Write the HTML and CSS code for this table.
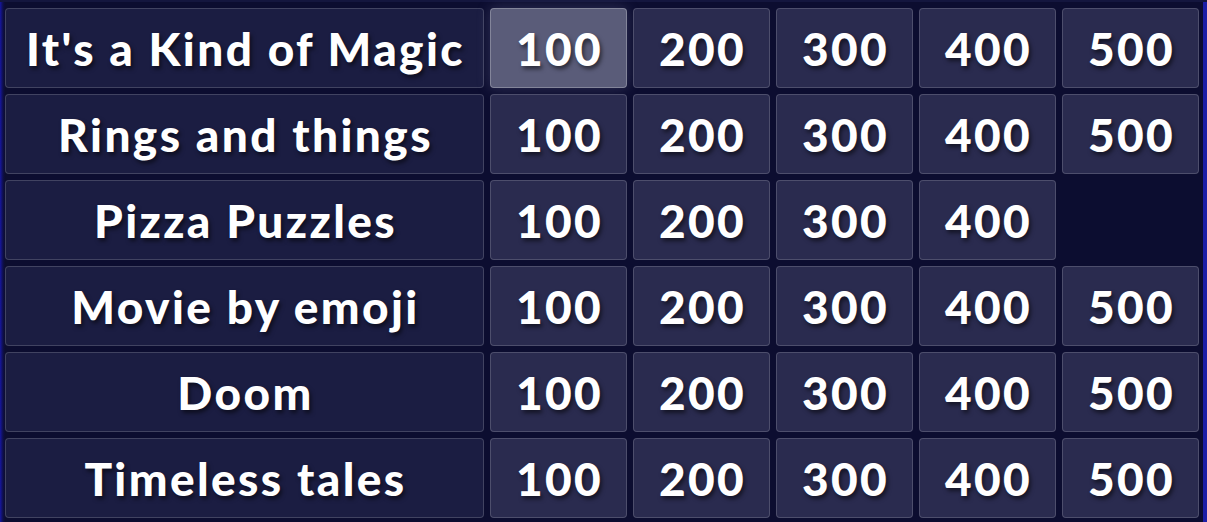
FILE: index.html
```html
<!DOCTYPE html>
<html>
<head>
<meta charset="utf-8">
<link rel="stylesheet" href="styles.css">
</head>
<body>
<div class="board">
  <div class="row">
    <div class="cat">It's a Kind of Magic</div>
    <div class="val active">100</div><div class="val">200</div><div class="val">300</div><div class="val">400</div><div class="val">500</div>
  </div>
  <div class="row">
    <div class="cat">Rings and things</div>
    <div class="val">100</div><div class="val">200</div><div class="val">300</div><div class="val">400</div><div class="val">500</div>
  </div>
  <div class="row">
    <div class="cat">Pizza Puzzles</div>
    <div class="val">100</div><div class="val">200</div><div class="val">300</div><div class="val">400</div><div class="empty"></div>
  </div>
  <div class="row">
    <div class="cat">Movie by emoji</div>
    <div class="val">100</div><div class="val">200</div><div class="val">300</div><div class="val">400</div><div class="val">500</div>
  </div>
  <div class="row">
    <div class="cat">Doom</div>
    <div class="val">100</div><div class="val">200</div><div class="val">300</div><div class="val">400</div><div class="val">500</div>
  </div>
  <div class="row">
    <div class="cat">Timeless tales</div>
    <div class="val">100</div><div class="val">200</div><div class="val">300</div><div class="val">400</div><div class="val">500</div>
  </div>
</div>
</body>
</html>
```
FILE: styles.css
```css
html, body {
  margin: 0;
  height: 100%;
}
body {
  background: linear-gradient(to right, #1616a0 0, #0e0f4a 3px, #0c0d30 5px, #0c0d30 calc(100% - 4px), #1d1fa6 calc(100% - 4px));
  font-family: Lato, "Open Sans", sans-serif;
  overflow: hidden;
}
.board {
  border-top: 2px solid #14163e;
  padding: 6px 7px 0 5px;
  display: flex;
  flex-direction: column;
  gap: 6px;
}
.row {
  display: grid;
  grid-template-columns: 479px repeat(5, 137px);
  column-gap: 6px;
  height: 80px;
}
.cat, .val {
  box-sizing: border-box;
  border: 1px solid rgba(255, 255, 255, 0.17);
  border-radius: 4px;
  display: flex;
  align-items: center;
  justify-content: center;
  color: #fff;
  font-weight: 900;
  font-size: 46px;
  letter-spacing: 2.4px;
  padding-left: 2px;
  text-shadow: 2px 3px 4px rgba(0, 0, 0, 0.55);
  white-space: nowrap;
}
.cat {
  background: #1b1d42;
}
.val {
  background: #2a2b4f;
}
.val.active {
  background: #5a5c79;
  border-color: rgba(255, 255, 255, 0.25);
  box-shadow: 0 0 14px rgba(160, 160, 200, 0.25);
}
```
